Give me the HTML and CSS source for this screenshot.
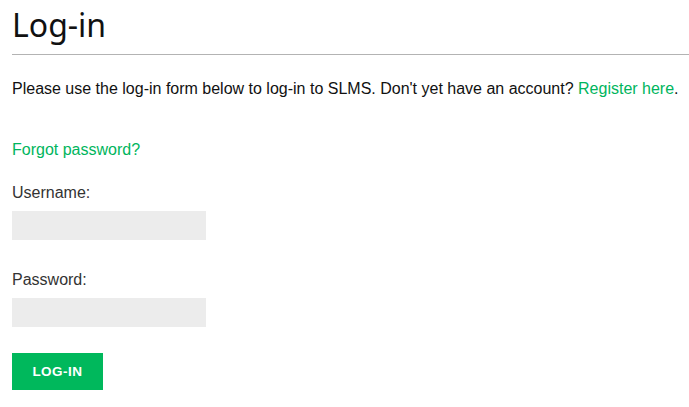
FILE: index.html
```html
<!DOCTYPE html>
<html>
<head>
<meta charset="utf-8">
<link rel="stylesheet" href="styles.css">
</head>
<body>
<main class="page">
  <h1 class="title">Log-in</h1>
  <hr class="rule">
  <p class="intro">Please use the log-in form below to log-in to SLMS. Don't yet have an account? <a class="link" href="#">Register here</a>.</p>
  <p class="forgot"><a class="link" href="#">Forgot password?</a></p>
  <form class="form">
    <label class="label" for="u">Username:</label>
    <input class="field" id="u" type="text">
    <label class="label label-second" for="p">Password:</label>
    <input class="field" id="p" type="password">
    <button class="btn" type="button">LOG-IN</button>
  </form>
</main>
</body>
</html>
```

FILE: styles.css
```css
html, body {
  margin: 0;
  padding: 0;
  background: #fff;
}
.page {
  padding: 4px 0 0 12px;
  font-family: "Liberation Sans", Arial, sans-serif;
  color: #111;
}
.title {
  margin: 0;
  font-family: "Noto Sans", "Open Sans", sans-serif;
  font-weight: 400;
  font-size: 32px;
  line-height: 42px;
  color: #111;
}
.rule {
  margin: 8px 0 0 0;
  border: 0;
  border-top: 1px solid #b3b3b3;
  height: 0;
}
.intro {
  margin: 24px 0 0 0;
  font-size: 16px;
  line-height: 20px;
}
.link {
  color: #00b55d;
  text-decoration: none;
}
.forgot {
  margin: 41px 0 0 0;
  font-size: 16px;
  line-height: 20px;
}
.form {
  display: flex;
  flex-direction: column;
  align-items: flex-start;
  margin-top: 23px;
}
.label {
  font-size: 16px;
  line-height: 20px;
  color: #333;
}
.label-second {
  margin-top: 30px;
}
.field {
  margin: 8px 0 0 0;
  width: 194px;
  height: 29px;
  box-sizing: border-box;
  border: 0;
  background: #ececec;
  padding: 0 8px;
  outline: none;
}
.btn {
  margin-top: 26px;
  width: 91px;
  height: 37px;
  border: 0;
  background: #00b85c;
  color: #fff;
  font-family: "Liberation Sans", Arial, sans-serif;
  font-weight: 700;
  font-size: 13.5px;
  letter-spacing: 0.5px;
  padding: 0;
}
```
